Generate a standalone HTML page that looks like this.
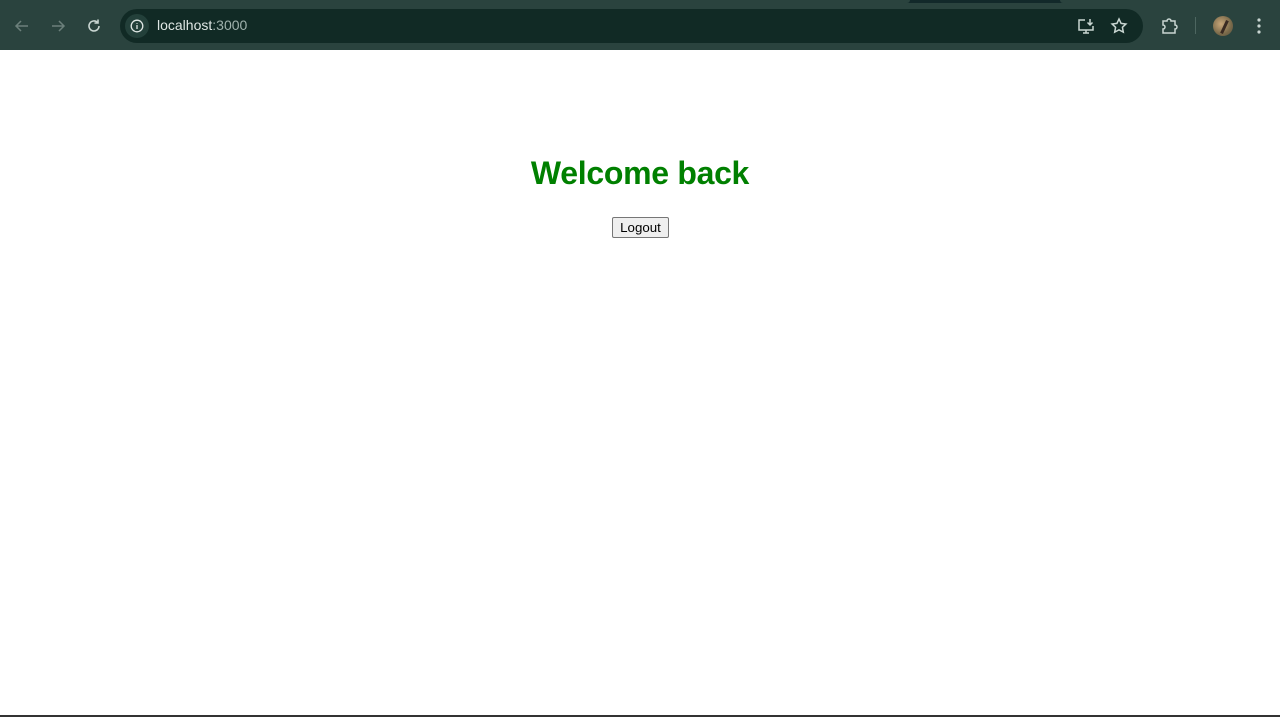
<!DOCTYPE html>
<html><head><meta charset="utf-8"><style>
*{margin:0;padding:0;box-sizing:border-box}
body{width:1280px;height:717px;background:#fff;font-family:"Liberation Sans",sans-serif;position:relative;overflow:hidden}
.top{position:absolute;left:0;top:0;width:1280px;height:50px;background:#2a433e}
.strip{position:absolute;left:0;top:0;width:1280px;height:3px;background:#12292a}
.tab{position:absolute;left:0;top:0;width:910px;height:3px;background:#2a433e;border-radius:0 0 6px 0}
.tab2{position:absolute;left:1060px;top:0;width:220px;height:3px;background:#2a433e;border-radius:0 0 0 6px}
.omni{position:absolute;left:120px;top:9px;width:1023px;height:34px;background:#112a25;border-radius:17px}
.info{position:absolute;left:125px;top:14px;width:24px;height:24px;border-radius:12px;background:#23403a}
.url{position:absolute;left:157px;top:17px;font-size:14px;color:#dfe7e4}
.url span{color:#9fb1ac}
svg{position:absolute}
h1{position:absolute;left:0;width:1280px;top:155px;text-align:center;color:#008000;font-size:32px;font-weight:bold;font-family:"Liberation Sans",sans-serif;letter-spacing:-0.3px}
button{position:absolute;left:612px;top:217px;width:57px;height:21px;font-size:13.3px;font-family:"Liberation Sans",sans-serif;background:#efefef;border:1px solid #767676;border-radius:2px;color:#000}
.bottom{position:absolute;left:0;top:715px;width:1280px;height:2px;background:#333}
</style></head><body>
<div class="top"></div><div class="strip"></div><div class="tab"></div><div class="tab2"></div>
<svg style="left:13px;top:17px" width="18" height="18" viewBox="0 0 18 18" fill="none" stroke="#6c807b" stroke-width="1.5"><path d="M15 9H3M8 4L3 9l5 5"/></svg>
<svg style="left:49px;top:17px" width="18" height="18" viewBox="0 0 18 18" fill="none" stroke="#6c807b" stroke-width="1.5"><path d="M3 9h12M10 4l5 5-5 5"/></svg>
<svg style="left:85px;top:17px" width="18" height="18" viewBox="0 0 18 18" fill="none" stroke="#c9d6d2" stroke-width="1.6"><path d="M14 9a5 5 0 1 1-1.5-3.6"/><path d="M13 2.5v3.5h-3.5"/></svg>
<div class="omni"></div><div class="info"></div>
<svg style="left:130px;top:19px" width="14" height="14" viewBox="0 0 14 14" fill="none" stroke="#dfe7e4" stroke-width="1.3"><circle cx="7" cy="7" r="5.8"/><path d="M7 6v4M7 4v.8"/></svg>
<div class="url">localhost<span>:3000</span></div>
<svg style="left:1077px;top:17px" width="18" height="18" viewBox="0 0 18 18" fill="none" stroke="#c9d6d2" stroke-width="1.5"><path d="M8 3H2v10h14V9"/><path d="M6 16h6M9 13v3M13 2v6M10.5 5.5L13 8l2.5-2.5"/></svg>
<svg style="left:1110px;top:17px" width="18" height="18" viewBox="0 0 18 18" fill="none" stroke="#c9d6d2" stroke-width="1.5"><path d="M9 2l2.1 4.4 4.8.6-3.5 3.3.9 4.8L9 12.8 4.7 15.1l.9-4.8L2.1 7l4.8-.6z"/></svg>
<svg style="left:1160px;top:16px" width="20" height="20" viewBox="0 0 20 20" fill="none" stroke="#c9d6d2" stroke-width="1.5"><path d="M3 5h4a2 2 0 0 1 4 0h4v4a2 2 0 0 1 0 4v4H3v-4a2 2 0 0 0 0-4z"/></svg>
<div style="position:absolute;left:1195px;top:17px;width:1px;height:17px;background:#4d6660"></div>
<div style="position:absolute;left:1213px;top:16px;width:20px;height:20px;border-radius:10px;background:radial-gradient(circle at 40% 40%,#c9a77a,#7a6a4a 60%,#5a5040)"></div>
<div style="position:absolute;left:1223px;top:20px;width:3px;height:14px;background:#3a2a22;transform:rotate(25deg)"></div>
<svg style="left:1250px;top:16px" width="18" height="20" viewBox="0 0 18 20" fill="#c9d6d2"><circle cx="9" cy="4" r="1.6"/><circle cx="9" cy="10" r="1.6"/><circle cx="9" cy="16" r="1.6"/></svg>
<h1>Welcome back</h1>
<button>Logout</button>
<div class="bottom"></div>
</body></html>
